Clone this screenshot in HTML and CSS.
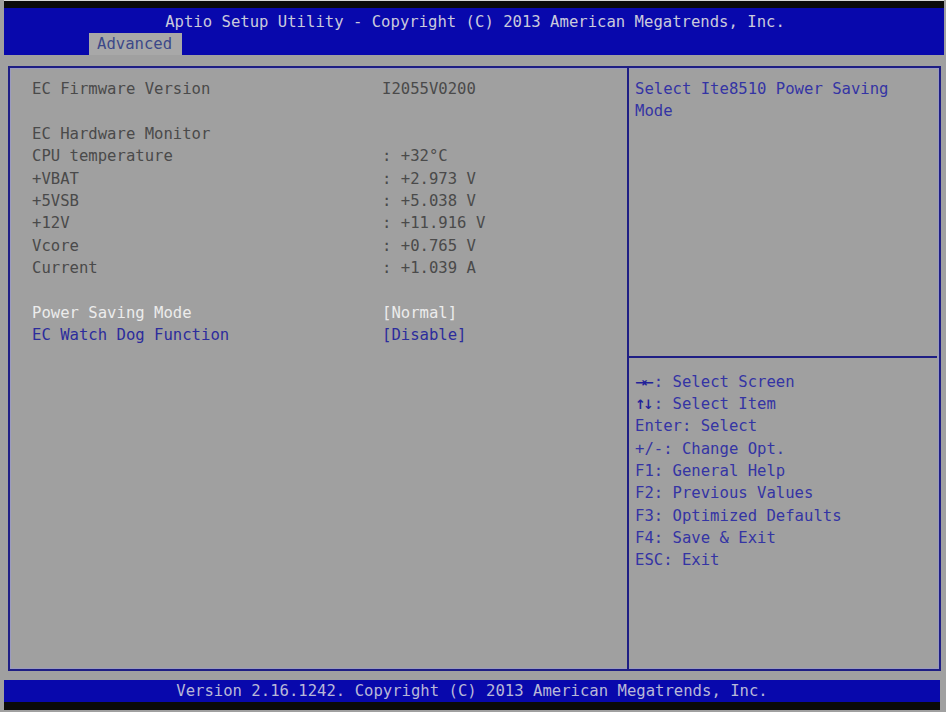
FILE: index.html
```html
<!DOCTYPE html>
<html>
<head>
<meta charset="utf-8">
<link rel="stylesheet" href="styles.css">
</head>
<body>
<div class="screen">
  <div class="topbar"></div>
  <header class="header">
    <div class="title">Aptio Setup Utility - Copyright (C) 2013 American Megatrends, Inc.</div>
    <div class="tabs"><div class="tab">Advanced</div></div>
  </header>
  <main class="frame">
    <section class="left">
      <div class="row"><span class="lbl">EC Firmware Version</span><span class="val">I2055V0200</span></div>
      <div class="row blank"></div>
      <div class="row"><span class="lbl">EC Hardware Monitor</span></div>
      <div class="row"><span class="lbl">CPU temperature</span><span class="val">: +32°C</span></div>
      <div class="row"><span class="lbl">+VBAT</span><span class="val">: +2.973 V</span></div>
      <div class="row"><span class="lbl">+5VSB</span><span class="val">: +5.038 V</span></div>
      <div class="row"><span class="lbl">+12V</span><span class="val">: +11.916 V</span></div>
      <div class="row"><span class="lbl">Vcore</span><span class="val">: +0.765 V</span></div>
      <div class="row"><span class="lbl">Current</span><span class="val">: +1.039 A</span></div>
      <div class="row blank"></div>
      <div class="row selected"><span class="lbl">Power Saving Mode</span><span class="val">[Normal]</span></div>
      <div class="row option"><span class="lbl">EC Watch Dog Function</span><span class="val">[Disable]</span></div>
    </section>
    <aside class="right">
      <div class="helptop">
        <div class="helptext">Select Ite8510 Power Saving<br>Mode</div>
      </div>
      <div class="keys">
        <div class="key"><b class="arr">→←</b>: Select Screen</div>
        <div class="key"><b class="arr">↑↓</b>: Select Item</div>
        <div class="key">Enter: Select</div>
        <div class="key">+/-: Change Opt.</div>
        <div class="key">F1: General Help</div>
        <div class="key">F2: Previous Values</div>
        <div class="key">F3: Optimized Defaults</div>
        <div class="key">F4: Save &amp; Exit</div>
        <div class="key">ESC: Exit</div>
      </div>
    </aside>
  </main>
  <footer class="footer">Version 2.16.1242. Copyright (C) 2013 American Megatrends, Inc.</footer>
  <div class="bottombar"></div>
</div>
</body>
</html>
```
FILE: styles.css
```css
* { box-sizing: border-box; }
html, body { margin: 0; padding: 0; }
body {
  background: #a0a0a0;
  font-family: "DejaVu Sans Mono", "Liberation Mono", monospace;
  font-size: 15.6px;
  width: 946px;
  height: 712px;
  overflow: hidden;
}
.screen {
  display: flex;
  flex-direction: column;
  height: 712px;
}
.topbar {
  height: 8px;
  background: #0a0a0a;
  border-top: 1px solid #d8d8d8;
  margin: 0 2px 0 4px;
}
.header {
  height: 47px;
  background: #0808ac;
  margin: 0 2px 0 4px;
  padding-top: 3px;
  display: flex;
  flex-direction: column;
}
.title {
  height: 22px;
  line-height: 22px;
  text-align: center;
  color: #cacadc;
  white-space: pre;
  padding-left: 2px;
}
.tabs {
  display: flex;
  padding-left: 85px;
}
.tab {
  width: 93px;
  height: 22px;
  line-height: 22px;
  background: #a8a8a8;
  color: #3c4888;
  padding-left: 8px;
}
.frame {
  margin: 11px 5px 0 8px;
  height: 605px;
  border: 2px solid #1e1e84;
  display: flex;
  box-shadow: inset 0 0 0 1px #9a9ac0;
}
.left {
  width: 619px;
  padding: 10px 0 0 22px;
  border-right: 2px solid #1e1e84;
}
.row {
  display: flex;
  height: 22.4px;
  line-height: 22.4px;
  color: #4a4a4a;
  white-space: pre;
}
.lbl { width: 350px; }
.row.selected { color: #ececec; }
.row.option { color: #2c2c9c; }
.right {
  flex: 1;
  display: flex;
  flex-direction: column;
  color: #3434a4;
}
.helptop {
  height: 290px;
  border-bottom: 2px solid #1e1e84;
  padding: 10px 0 0 6px;
  margin-right: 2px;
}
.helptext {
  line-height: 22.4px;
}
.keys {
  padding: 12.8px 0 0 6px;
}
.key {
  height: 22.3px;
  line-height: 22.3px;
  white-space: pre;
}
.arr {
  display: inline-block;
  width: 18.8px;
  font-family: "DejaVu Sans", sans-serif;
  font-size: 13px;
  font-weight: bold;
  letter-spacing: -3px;
  color: #22229a;
}
.footer {
  margin: 9px 6px 0 4px;
  height: 22px;
  line-height: 22px;
  background: #0808ac;
  color: #b8b8d8;
  text-align: center;
  white-space: pre;
}
.bottombar {
  height: 8px;
  background: #0a0a0a;
  margin: 0 6px 0 4px;
}
```
